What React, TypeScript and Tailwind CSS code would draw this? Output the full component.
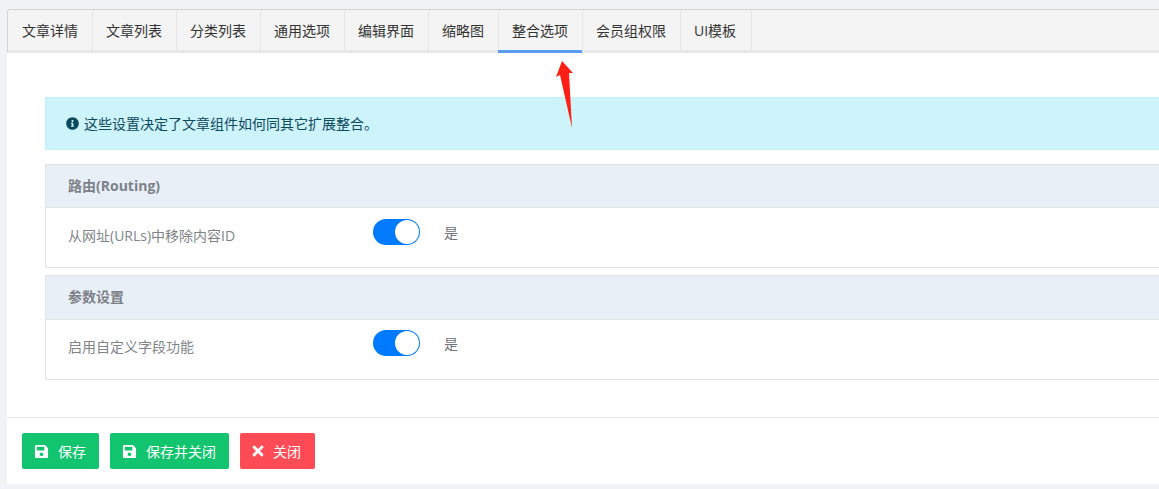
import { FaInfoCircle, FaSave, FaTimes } from "react-icons/fa";

const tabs = ["文章详情", "文章列表", "分类列表", "通用选项", "编辑界面", "缩略图", "整合选项", "会员组权限", "UI模板"];

const Toggle = () => (
  <div className="flex h-[26px] w-[47px] items-center justify-end rounded-full bg-[#007bff] pr-px">
    <div className="h-6 w-6 rounded-full bg-white" />
  </div>
);

const Group = ({ title, label, headClass, rowClass }: { title: string; label: string; headClass: string; rowClass: string }) => (
  <div className="border border-[#e2e5e8]">
    <div className={`flex items-center border-b border-[#e2e5e8] bg-[#e9eff7] pb-[2px] pl-[22px] text-[14px] font-bold text-[#7c8288] ${headClass}`}>
      {title}
    </div>
    <div className="flex h-[59px] flex-col bg-white pl-[22px]">
      <div className={`flex ${rowClass}`}>
        <div className="w-[305px] pt-[18px] text-[14px] leading-[20px] text-[#7f8489]">{label}</div>
        <div className="pt-[11px]">
          <Toggle />
        </div>
        <div className="pl-6 pt-[15px] text-[14px] leading-[20px] text-[#6f7479]">是</div>
      </div>
    </div>
  </div>
);

const Button = ({ icon, text, className }: { icon: React.ReactNode; text: string; className: string }) => (
  <button className={`flex h-9 items-center rounded-[2px] text-[14px] text-white ${className}`}>
    {icon}
    {text}
  </button>
);

export default function App() {
  return (
    <div className="relative h-[489px] w-[1159px] overflow-hidden bg-[#eff3f5] pl-[7px] pt-[9px] font-['Open_Sans','Noto_Sans_CJK_SC',sans-serif]">
      <div className="h-[475px] w-[1200px] bg-white">
        {/* TABS */}
        <div className="flex h-[44px] rounded-tl-[3px] border-l border-t border-[#d4d4d4] bg-[#f4f4f4] shadow-[inset_0_-3px_0_#e8e8e8]">
          {tabs.map((tab, idx) => (
            <div
              key={tab}
              className={`relative flex items-center border-[#e6e6e6] pb-[2px] text-[14px] text-[#333] ${
                idx === 0 ? "px-[14px]" : "border-l pl-[13px] pr-[14px]"
              } ${idx === 6 ? "after:absolute after:-left-px after:right-0 after:bottom-0 after:h-[3px] after:bg-[#5b9df0]" : ""} ${
                idx === 8 ? "border-r pr-[15px]" : ""
              }`}
            >
              {tab}
            </div>
          ))}
        </div>

        {/* CONTENT */}
        <div className="pl-[38px] pt-[44px]">
          <div className="flex h-[53px] items-center gap-[5px] border border-[#c5eff8] bg-[#cdf3fb] pl-5 text-[14px] text-[#0c4a5e]">
            <FaInfoCircle size={13} className="text-[#0c4a5e]" />
            这些设置决定了文章组件如何同其它扩展整合。
          </div>
          <div className="mt-[14px] flex flex-col gap-[7px]">
            <Group title="路由(Routing)" label="从网址(URLs)中移除内容ID" headClass="h-[43px]" rowClass="" />
            <Group title="参数设置" label="启用自定义字段功能" headClass="h-[44px]" rowClass="-mt-px" />
          </div>
        </div>

        {/* FOOTER */}
        <div className="mt-[37px] flex gap-[11px] border-t border-[#e2e5e8] pl-[15px] pt-[15px]">
          <Button icon={<FaSave size={15} className="mr-[9px]" />} text="保存" className="bg-[#12c46e] pl-3 pr-[13px]" />
          <Button icon={<FaSave size={15} className="mr-[9px]" />} text="保存并关闭" className="bg-[#12c46e] pl-3 pr-[13px]" />
          <Button icon={<FaTimes size={16} className="mr-[7px]" />} text="关闭" className="bg-[#ff4b55] pl-[10px] pr-[14px]" />
        </div>
      </div>

      {/* ARROW */}
      <svg className="absolute left-[550px] top-[55px]" width="30" height="80" viewBox="550 55 30 80">
        <path d="M562 61 L573 73 L569 73 L572 128 L560 75 L556 77 Z" fill="#ff2015" />
      </svg>
    </div>
  );
}
